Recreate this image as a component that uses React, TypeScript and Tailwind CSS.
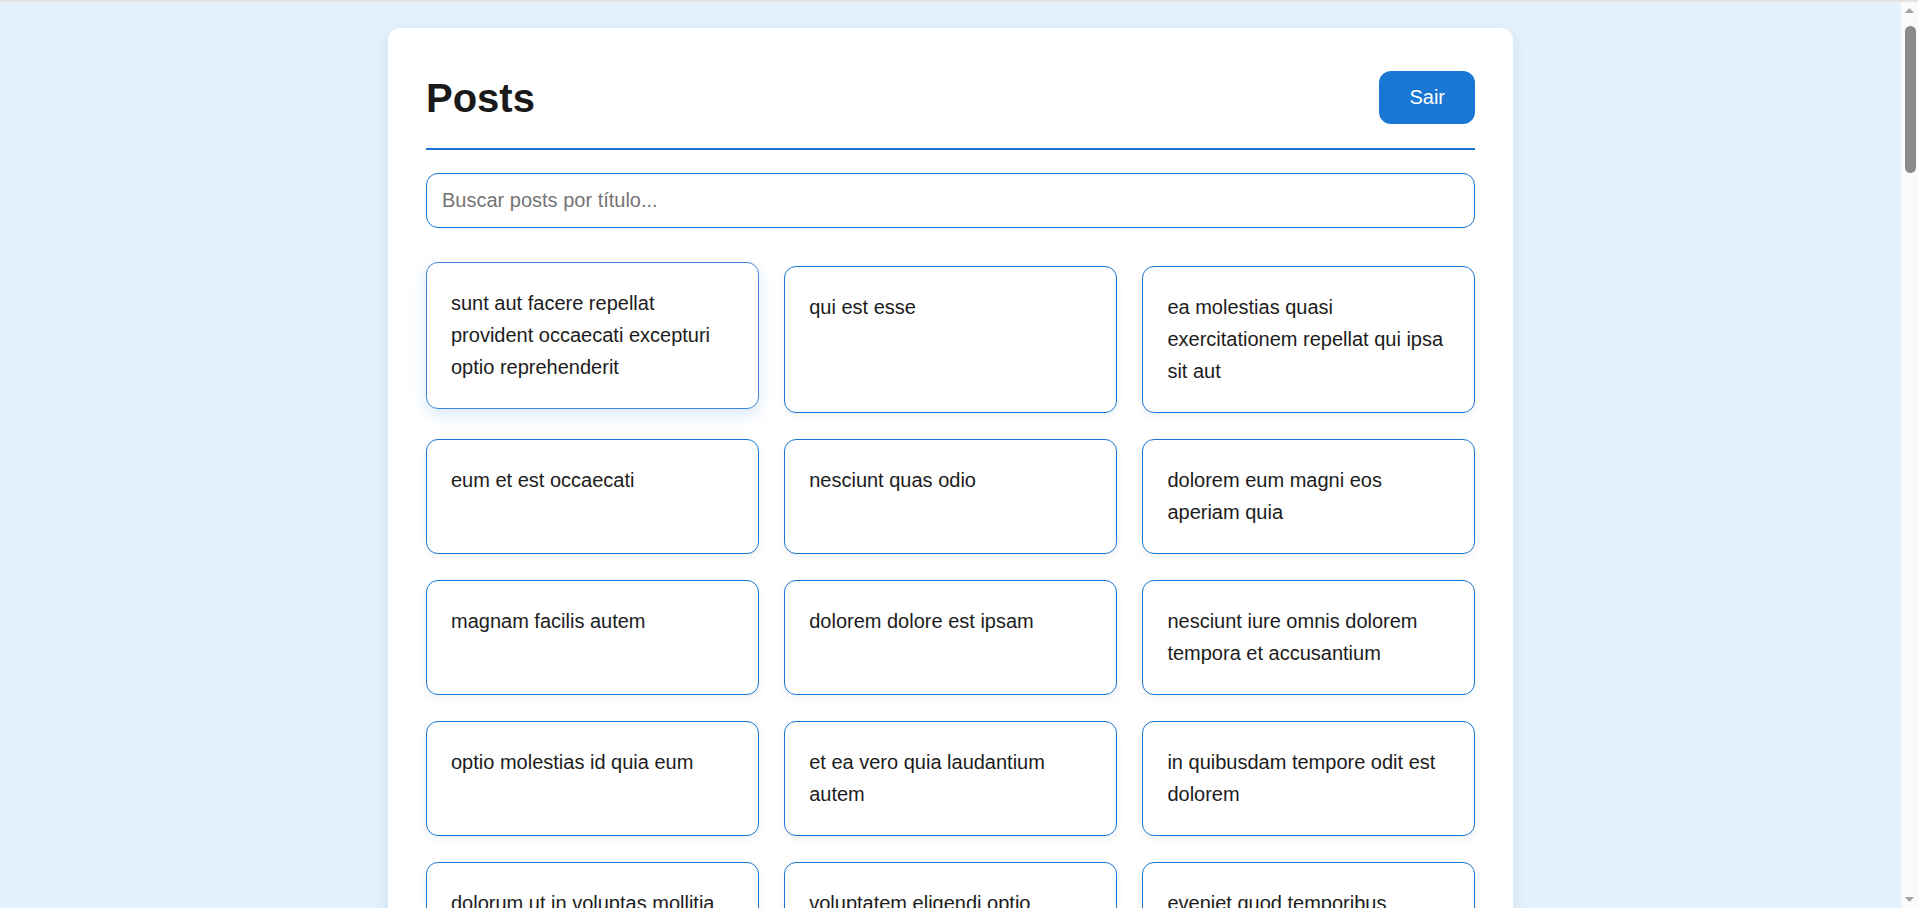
import React from 'react';

const posts: string[] = [
  'sunt aut facere repellat provident occaecati excepturi optio reprehenderit',
  'qui est esse',
  'ea molestias quasi exercitationem repellat qui ipsa sit aut',
  'eum et est occaecati',
  'nesciunt quas odio',
  'dolorem eum magni eos aperiam quia',
  'magnam facilis autem',
  'dolorem dolore est ipsam',
  'nesciunt iure omnis dolorem tempora et accusantium',
  'optio molestias id quia eum',
  'et ea vero quia laudantium autem',
  'in quibusdam tempore odit est dolorem',
  'dolorum ut in voluptas mollitia et saepe quo animi',
  'voluptatem eligendi optio',
  'eveniet quod temporibus',
  'sint suscipit perspiciatis velit dolorum rerum ipsa laboriosam odio',
  'fugit voluptas sed molestias voluptatem provident',
  'voluptate et itaque vero tempora molestiae',
  'adipisci placeat illum aut reiciendis qui',
  'doloribus ad provident suscipit at',
  'asperiores ea ipsam voluptatibus modi minima quia sint',
  'dolor sint quo a velit explicabo quia nam',
  'maxime id vitae nihil numquam',
  'autem hic labore sunt dolores incidunt',
  'rem alias distinctio quo quis',
  'est et quae odit qui non',
  'quasi id et eos tenetur aut quo autem',
  'delectus ullam et corporis nulla voluptas sequi',
  'iusto eius quod necessitatibus culpa ea',
  'a quo magni similique perferendis',
];

interface PostCardProps {
  title: string;
  hovered?: boolean;
}

const PostCard: React.FC<PostCardProps> = ({ title, hovered }) => {
  return (
    <div
      className={`rounded-xl border bg-white px-6 pt-6 pb-[25.5px] ${
        hovered
          ? '-translate-y-1 border-[#3f87d6] shadow-[0_6px_16px_rgba(25,118,210,0.16)]'
          : 'border-[#1976d2] shadow-[0_3px_8px_rgba(0,0,0,0.06)]'
      }`}
    >
      <p className="text-[20px] leading-8 text-[#1c1c1c]">{title}</p>
    </div>
  );
};

// fake classic scrollbar, the reference shows one on the right
const Scrollbar: React.FC = () => (
  <div className="flex w-[17px] shrink-0 flex-col items-center bg-[#fafafa]">
    <svg width="9" height="5" viewBox="0 0 9 5" className="mt-[6px] fill-[#a3a3a3]">
      <path d="M4.5 0L9 5H0z" />
    </svg>
    <div className="mt-[13px] ml-[2px] h-[147px] w-[11px] rounded-full bg-[#8a8a8a]" />
    <div className="flex-1" />
    <svg width="9" height="5" viewBox="0 0 9 5" className="mb-[6px] fill-[#a3a3a3]">
      <path d="M0 0H9L4.5 5z" />
    </svg>
  </div>
);

export default function App() {
  return (
    <div className="flex h-screen overflow-hidden border-t-2 border-[#e4e4e4] font-['Liberation_Sans',Arial,sans-serif]">
      <div className="flex-1 overflow-hidden bg-[#e3f2fd] pt-[26px] pb-10">
        <div className="mx-auto w-[1125px] rounded-xl bg-white px-[38px] pt-[43px] pb-10 shadow-[0_4px_20px_rgba(0,0,0,0.08)]">
          <div className="flex items-center justify-between border-b-2 border-[#1976d2] pb-6">
            <h1 className="text-[40px] font-bold leading-[46px] text-[#1a1a1a]">Posts</h1>
            <button className="rounded-xl bg-[#1976d2] px-[30px] py-[15px] text-[20px] leading-[23px] text-white">
              Sair
            </button>
          </div>

          <input
            type="text"
            placeholder="Buscar posts por título..."
            className="mt-[23px] block w-full rounded-xl border border-[#1976d2] bg-white px-[15px] py-[15px] text-[20px] leading-[23px] text-[#212121] outline-none placeholder:text-[#757575]"
          />

          <div className="mt-[37.5px] grid grid-cols-3 gap-[25.6px]">
            {posts.map((title, index) => (
              <PostCard key={index} title={title} hovered={index === 0} />
            ))}
          </div>
        </div>
      </div>
      <Scrollbar />
    </div>
  );
}
